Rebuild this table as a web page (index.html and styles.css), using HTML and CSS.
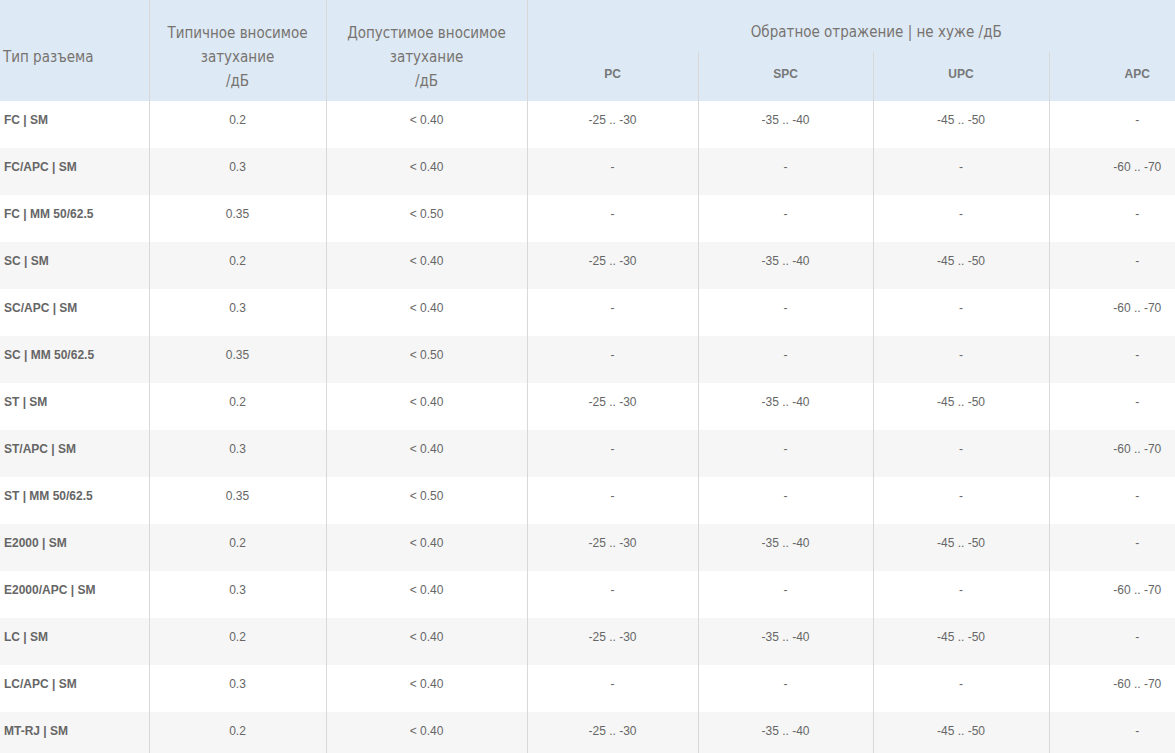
FILE: index.html
```html
<!DOCTYPE html>
<html lang="ru">
<head>
<meta charset="utf-8">
<title>Разъемы</title>
<link rel="stylesheet" href="styles.css">
</head>
<body>
<div class="wrap">
<table class="spec">
<colgroup>
<col class="c1"><col class="c2"><col class="c3"><col class="c4"><col class="c5"><col class="c6"><col class="c7">
</colgroup>
<thead>
<tr class="hr1">
<th rowspan="2" class="left">Тип разъема</th>
<th rowspan="2">Типичное вносимое<br>затухание<br>/дБ</th>
<th rowspan="2">Допустимое вносимое<br>затухание<br>/дБ</th>
<th colspan="4" class="group">Обратное отражение | не хуже /дБ</th>
</tr>
<tr class="hr2">
<th class="sub first">PC</th><th class="sub">SPC</th><th class="sub">UPC</th><th class="sub">APC</th>
</tr>
</thead>
<tbody>
<tr><td>FC | SM</td><td>0.2</td><td>&lt; 0.40</td><td>-25 .. -30</td><td>-35 .. -40</td><td>-45 .. -50</td><td>-</td></tr>
<tr><td>FC/APC | SM</td><td>0.3</td><td>&lt; 0.40</td><td>-</td><td>-</td><td>-</td><td>-60 .. -70</td></tr>
<tr><td>FC | MM 50/62.5</td><td>0.35</td><td>&lt; 0.50</td><td>-</td><td>-</td><td>-</td><td>-</td></tr>
<tr><td>SC | SM</td><td>0.2</td><td>&lt; 0.40</td><td>-25 .. -30</td><td>-35 .. -40</td><td>-45 .. -50</td><td>-</td></tr>
<tr><td>SC/APC | SM</td><td>0.3</td><td>&lt; 0.40</td><td>-</td><td>-</td><td>-</td><td>-60 .. -70</td></tr>
<tr><td>SC | MM 50/62.5</td><td>0.35</td><td>&lt; 0.50</td><td>-</td><td>-</td><td>-</td><td>-</td></tr>
<tr><td>ST | SM</td><td>0.2</td><td>&lt; 0.40</td><td>-25 .. -30</td><td>-35 .. -40</td><td>-45 .. -50</td><td>-</td></tr>
<tr><td>ST/APC | SM</td><td>0.3</td><td>&lt; 0.40</td><td>-</td><td>-</td><td>-</td><td>-60 .. -70</td></tr>
<tr><td>ST | MM 50/62.5</td><td>0.35</td><td>&lt; 0.50</td><td>-</td><td>-</td><td>-</td><td>-</td></tr>
<tr><td>E2000 | SM</td><td>0.2</td><td>&lt; 0.40</td><td>-25 .. -30</td><td>-35 .. -40</td><td>-45 .. -50</td><td>-</td></tr>
<tr><td>E2000/APC | SM</td><td>0.3</td><td>&lt; 0.40</td><td>-</td><td>-</td><td>-</td><td>-60 .. -70</td></tr>
<tr><td>LC | SM</td><td>0.2</td><td>&lt; 0.40</td><td>-25 .. -30</td><td>-35 .. -40</td><td>-45 .. -50</td><td>-</td></tr>
<tr><td>LC/APC | SM</td><td>0.3</td><td>&lt; 0.40</td><td>-</td><td>-</td><td>-</td><td>-60 .. -70</td></tr>
<tr><td>MT-RJ | SM</td><td>0.2</td><td>&lt; 0.40</td><td>-25 .. -30</td><td>-35 .. -40</td><td>-45 .. -50</td><td>-</td></tr>
</tbody>
</table>
</div>
</body>
</html>
```

FILE: styles.css
```css
html, body {
  margin: 0;
  padding: 0;
  background: #fff;
}
.wrap {
  width: 100%;
  overflow: hidden;
}
.spec {
  width: 1225px;
  table-layout: fixed;
  border-collapse: collapse;
  font-family: "Liberation Sans", Arial, sans-serif;
  font-size: 12px;
  color: #666;
}
.c1 { width: 149px; }
.c2 { width: 177px; }
.c3 { width: 201px; }
.c4 { width: 171px; }
.c5 { width: 175px; }
.c6 { width: 176px; }
.c7 { width: 176px; }

.spec thead th {
  background: #dde9f5;
  font-family: "DejaVu Sans Condensed", "DejaVu Sans", sans-serif;
  font-stretch: condensed;
  font-weight: normal;
  font-size: 15px;
  line-height: 24px;
  color: #77736f;
  text-align: center;
  padding: 13px 4px 0;
  border-left: 1px solid #d8d8d8;
}
.spec thead th.left {
  text-align: left;
  padding-left: 3px;
  border-left: none;
}
.hr1 { height: 52px; }
.hr2 { height: 49px; }
.spec thead th.group {
  padding-top: 12px;
  vertical-align: middle;
}
.spec thead th.sub {
  font-family: "Liberation Sans", Arial, sans-serif;
  font-stretch: normal;
  font-weight: bold;
  font-size: 12px;
  line-height: 14px;
  color: #777;
  padding: 0 4px 6px;
}
.spec tbody tr {
  height: 47px;
}
.spec tbody tr:nth-child(even) {
  background: #f6f6f6;
}
.spec tbody td {
  vertical-align: top;
  padding: 12px 4px 0;
  line-height: 14px;
  text-align: center;
  border-left: 1px solid #d8d8d8;
}
.spec tbody td:first-child {
  text-align: left;
  font-weight: bold;
  border-left: none;
  padding-left: 4px;
}
```
